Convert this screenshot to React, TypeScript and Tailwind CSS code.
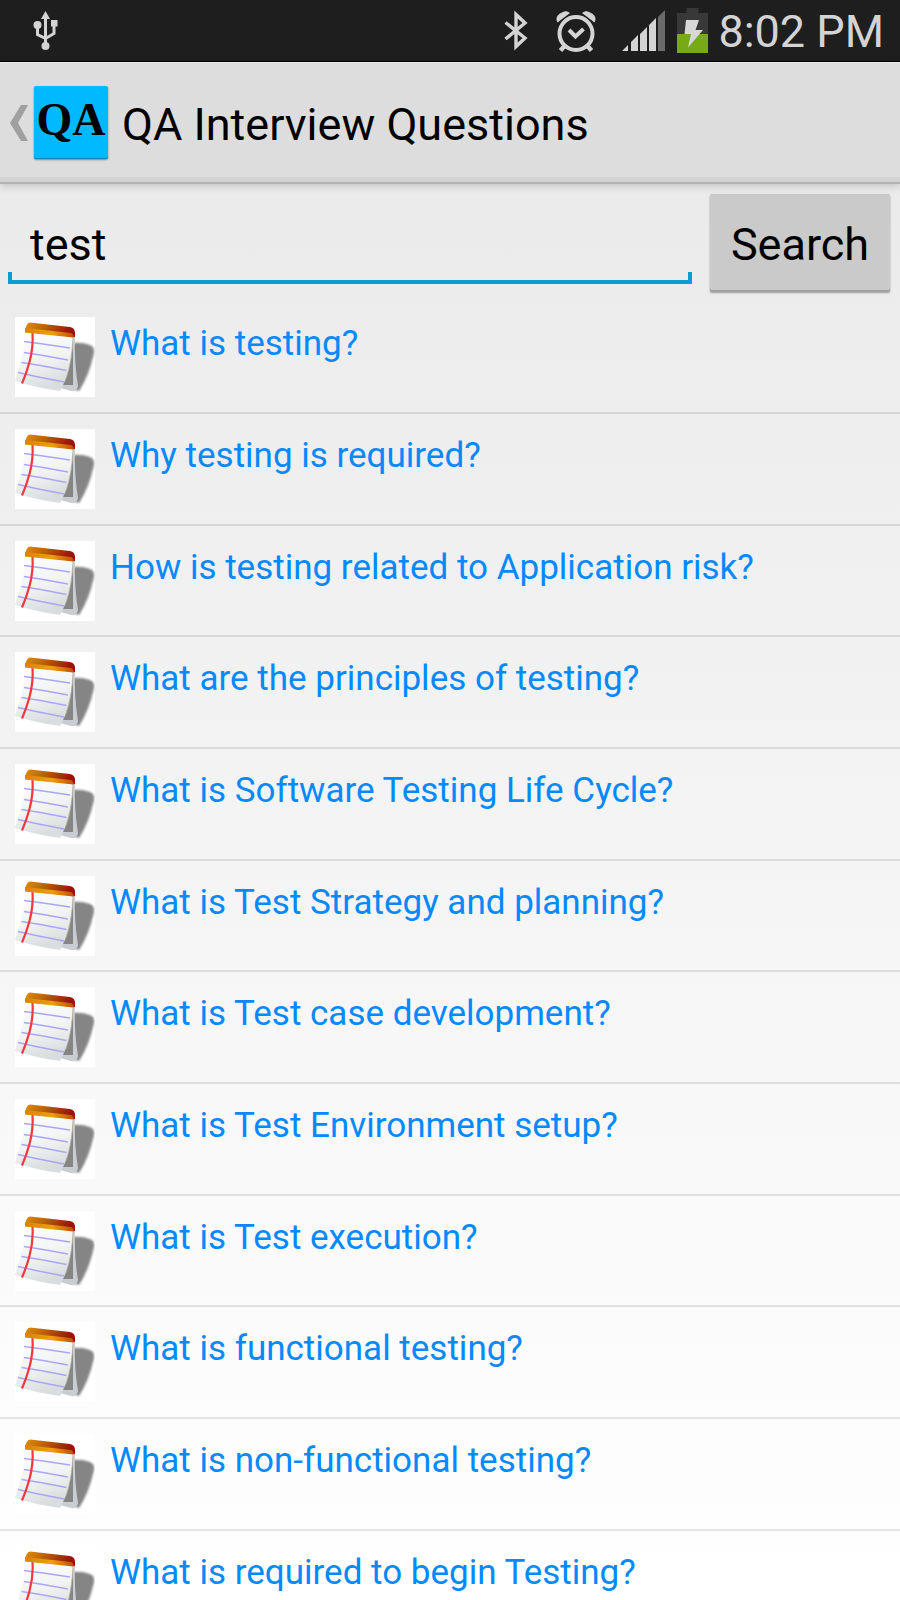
import { useState } from 'react';

const questions = [
  'What is testing?',
  'Why testing is required?',
  'How is testing related to Application risk?',
  'What are the principles of testing?',
  'What is Software Testing Life Cycle?',
  'What is Test Strategy and planning?',
  'What is Test case development?',
  'What is Test Environment setup?',
  'What is Test execution?',
  'What is functional testing?',
  'What is non-functional testing?',
  'What is required to begin Testing?',
];

function UsbIcon() {
  return (
    <svg viewBox="0 0 26 42" className="h-[42px] w-[26px]" fill="none" stroke="#d4d4d4" strokeWidth="3">
      <path d="M12.5 7v28M4.5 17v7.500l8 4M21 15v8.500l-8.500 5" />
      <circle cx="4.500" cy="15" r="4" fill="#d4d4d4" stroke="none" />
      <rect x="18" y="10" width="6.500" height="6.500" fill="#d4d4d4" stroke="none" />
      <path d="M12.500 1l4.500 8h-9z" fill="#d4d4d4" stroke="none" />
      <circle cx="12.500" cy="36" r="4" fill="#d4d4d4" stroke="none" />
    </svg>
  );
}

function BluetoothIcon() {
  return (
    <svg viewBox="0 0 24 42" className="h-[42px] w-6" fill="none" stroke="#d4d4d4" strokeWidth="3.400">
      <path d="M1.500 12.500L21 28l-9 8.500V4.500l9 8.500L1.500 29" />
    </svg>
  );
}

function AlarmIcon() {
  return (
    <svg viewBox="0 0 40 42" className="h-[42px] w-10" fill="none" stroke="#d4d4d4">
      <circle cx="20" cy="23.500" r="16.500" strokeWidth="4" />
      <path d="M13 20l6.500 6.500 8-7.500" strokeWidth="4" />
      <path d="M8.500 36l-4 4.500M31.500 36l4 4.500" strokeWidth="4.500" />
      <path d="M1.500 12.500C-.5 9 .5 6 4 3.500S10.500 0 14 3zM38.500 12.500c2-3.500 1-6.500-2.500-9S29.500 0 26 3z" fill="#d4d4d4" stroke="none" />
    </svg>
  );
}

function SignalIcon() {
  return (
    <svg viewBox="0 0 43 41" className="h-[41px] w-[43px]" fill="#d4d4d4">
      <path d="M0 41l6-6v6zM9 32l7-7v16H9zM18 24l7-7v24h-7zM27 15l7-7v33h-7z" />
      <path d="M36 7l7-7v41h-7z" fill="#6b6b6b" />
    </svg>
  );
}

function BatteryIcon() {
  return (
    <svg viewBox="0 0 31 45" className="h-[45px] w-[31px]">
      <path d="M9.500 0h12v5H31v21H0V5h9.500z" fill="#383838" />
      <path d="M0 26h31v19H0z" fill="#76ab17" />
      <path d="M9 12h13l-3.500 10H26L11 39.500l3-13.500H7.500z" fill="#d8d8d8" />
    </svg>
  );
}

function NotepadIcon() {
  return (
    <svg viewBox="0 0 80 80" className="size-20 shrink-0 bg-white" aria-hidden="true">
      <defs>
        <linearGradient id="binding" x1="0" y1="0" x2="1" y2="0.200">
          <stop offset="0" stopColor="#e08f0c" />
          <stop offset="0.450" stopColor="#b95f06" />
          <stop offset="1" stopColor="#9c0f0c" />
        </linearGradient>
        <linearGradient id="bindingFront" x1="0" y1="0" x2="1" y2="0">
          <stop offset="0" stopColor="#d98308" />
          <stop offset="0.550" stopColor="#ee9f0c" />
          <stop offset="1" stopColor="#c04f08" />
        </linearGradient>
        <linearGradient id="paper" x1="0" y1="0" x2="0.300" y2="1">
          <stop offset="0" stopColor="#ffffff" />
          <stop offset="0.600" stopColor="#f1f3f3" />
          <stop offset="1" stopColor="#d9dddd" />
        </linearGradient>
        <filter id="soft" x="-20%" y="-20%" width="140%" height="140%">
          <feGaussianBlur stdDeviation="1" />
        </filter>
      </defs>
      <path d="M57 26q10-1 18 2 5 2 4 8-5 23-15 38l-18-6z" fill="#858585" filter="url(#soft)" />
      <path d="M57 22l-1 26-8 20 9 1z" fill="#858585" />
      <path d="M58 18l2 1q-1 26 3 50-1 6-7 5l-11-3 3-3h10z" fill="#c9cdd1" />
      <path d="M11 13l47 6q-1 32-10 49l-3 6Q22 71 0 64q8-23 11-51z" fill="url(#paper)" />
      <path d="M58 20q-1 25-7 42" stroke="#b9a98f" strokeWidth="0.800" fill="none" />
      <g fill="none" stroke="#aaa6f5" strokeWidth="1.400">
        <path d="M9 24.500l19 2.500 27 4" />
        <path d="M9 35.500l19 3 25 4.500" />
        <path d="M6.500 45.500l19 3 26 5" />
        <path d="M3 55.500l18 4 28 5.500" />
      </g>
      <path d="M17.500 16q1 14-3 29-3 11-7.500 21.500" fill="none" stroke="#f2383f" strokeWidth="2.200" />
      <path d="M10 14q1-8 5-8.500L55 10q5 1 5 6v4l-50-5z" fill="url(#binding)" />
      <path d="M10 11l46 5q3 1 2.500 4.500L10 15.500z" fill="url(#bindingFront)" />
    </svg>
  );
}

export default function App() {
  const [query, setQuery] = useState('test');

  return (
    <div className="flex h-screen flex-col overflow-hidden bg-linear-to-b from-[#e8e8e8] to-white font-['Roboto',sans-serif] text-black">
      <div className="flex h-[62px] shrink-0 items-center justify-between border-b border-black bg-[#1e1e1e] pr-4 pl-[33px]">
        <UsbIcon />
        <div className="flex items-center">
          <BluetoothIcon />
          <div className="ml-7">
            <AlarmIcon />
          </div>
          <div className="ml-[26px]">
            <SignalIcon />
          </div>
          <div className="ml-3">
            <BatteryIcon />
          </div>
          <span className="ml-2.5 pt-0.5 text-[45px] leading-[58px] whitespace-nowrap text-[#d4d4d4]">8:02 PM</span>
        </div>
      </div>

      <header className="z-10 flex h-[122px] shrink-0 items-center border-t border-b-2 border-t-[#ececec] border-b-[#b2b2b2] bg-[#dddddd] pl-2.5 shadow-[inset_0_-5px_0_#d2d2d2,0_2px_8px_rgba(0,0,0,0.18)]">
        <a href="#" className="flex items-center gap-1.5" aria-label="Navigate up">
          <svg viewBox="0 0 18 36" className="h-9 w-[18px]" fill="#a0a0a0">
            <path d="M11 0h7L8 18l10 18h-7L0 18z" />
          </svg>
          <span className="flex h-[73px] w-[74px] justify-center rounded-xs bg-[#00b9ff] font-['Liberation_Serif',serif] text-[46px] leading-[68px] font-bold shadow-[inset_0_-1px_0_#0786b6,0_1px_2px_rgba(0,0,0,0.4)]">
            QA
          </span>
        </a>
        <h1 className="ml-3.5 pt-1 text-[45px] leading-[60px] whitespace-nowrap">QA Interview Questions</h1>
      </header>

      <form className="flex h-[118px] shrink-0 items-start gap-[18px] pt-2.5 pr-2.5 pl-2" onSubmit={(e) => e.preventDefault()}>
        <div className="relative mt-2.5 min-w-0 flex-1 border-b-4 border-[#0b9dd2] before:absolute before:bottom-0 before:left-0 before:h-2 before:w-1 before:bg-[#0b9dd2] after:absolute after:right-0 after:bottom-0 after:h-2 after:w-1 after:bg-[#0b9dd2]">
          <input
            aria-label="Search questions"
            value={query}
            onChange={(e) => setQuery(e.target.value)}
            className="block h-[76px] w-full bg-transparent px-[22px] pt-1 text-[45px] outline-none"
          />
        </div>
        <button
          type="submit"
          className="h-[98px] w-[180px] shrink-0 rounded-xs bg-[#cacaca] pt-1 text-[45px] shadow-[inset_0_-2px_0_#a0a0a0,0_1px_2px_rgba(0,0,0,0.35)]"
        >
          Search
        </button>
      </form>

      <ul className="min-h-0 flex-1 overflow-hidden">
        {questions.map((question) => (
          <li key={question} className="h-28 border-b-2 border-black/10 nth-[3n]:h-[111px]">
            <a href="#" className="flex gap-[15px] px-[15px] pt-[15px]">
              <NotepadIcon />
              <span className="pt-1.5 text-[35px] leading-[42px] text-[#0589ff]">{question}</span>
            </a>
          </li>
        ))}
      </ul>
    </div>
  );
}
